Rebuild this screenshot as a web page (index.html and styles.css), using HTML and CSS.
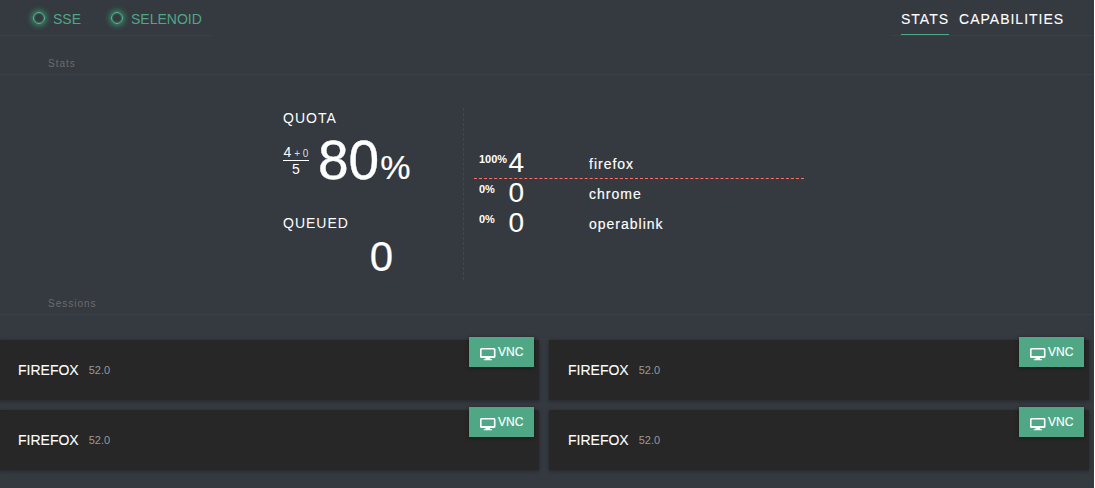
FILE: index.html
```html
<!DOCTYPE html>
<html lang="en">
<head>
<meta charset="utf-8">
<title>Selenoid UI</title>
<link rel="stylesheet" href="styles.css">
</head>
<body>
<svg width="0" height="0" class="defs"><defs>
<symbol id="monitor" viewBox="0 0 16 13"><path fill="currentColor" fill-rule="evenodd" d="M1.500 0H14a1.500 1.500 0 0 1 1.500 1.500v7A1.500 1.500 0 0 1 14 10H1.500A1.500 1.500 0 0 1 0 8.500v-7A1.500 1.500 0 0 1 1.500 0zM1.600 1.500v6.500h12.300V1.500zM5.700 10h4.200l.6 1.200H12V12.300H3.700v-1.100h1.400z"/></symbol>
</defs></svg>
<header class="top">
  <div class="statuses">
    <div class="status"><span class="ring"></span>SSE</div>
    <div class="status"><span class="ring"></span>SELENOID</div>
  </div>
  <nav class="nav"><a class="tab active">STATS</a><a class="tab">CAPABILITIES</a></nav>
</header>
<h2 class="section">Stats</h2>
<main class="stats">
  <section class="totals">
    <div class="label">QUOTA</div>
    <div class="quota">
      <div class="fraction"><div class="used">4<span class="pending"> + 0</span></div><div class="total">5</div></div>
      <div class="percent">80<span class="sign">%</span></div>
    </div>
    <div class="label">QUEUED</div>
    <div class="queued">0</div>
  </section>
  <section class="browsers">
    <div class="browser busy"><b class="share">100%</b><span class="count">4</span><span class="name">firefox</span></div>
    <div class="browser"><b class="share">0%</b><span class="count">0</span><span class="name">chrome</span></div>
    <div class="browser"><b class="share">0%</b><span class="count">0</span><span class="name">operablink</span></div>
  </section>
</main>
<h2 class="section sessions-title">Sessions</h2>
<div class="sessions">
  <article class="session"><span class="title">FIREFOX</span><span class="version">52.0</span><a class="vnc"><svg class="icon"><use href="#monitor"/></svg>VNC</a></article>
  <article class="session"><span class="title">FIREFOX</span><span class="version">52.0</span><a class="vnc"><svg class="icon"><use href="#monitor"/></svg>VNC</a></article>
  <article class="session"><span class="title">FIREFOX</span><span class="version">52.0</span><a class="vnc"><svg class="icon"><use href="#monitor"/></svg>VNC</a></article>
  <article class="session"><span class="title">FIREFOX</span><span class="version">52.0</span><a class="vnc"><svg class="icon"><use href="#monitor"/></svg>VNC</a></article>
</div>
</body>
</html>
```
FILE: styles.css
```css
* { box-sizing: border-box; }
html { background: #fff; }
body {
  margin: 0;
  width: 1094px;
  height: 488px;
  overflow: hidden;
  background: #353940;
  color: #fff;
  font-family: "Liberation Sans", Arial, sans-serif;
}
.defs { display: block; height: 0; }
.top { display: flex; justify-content: space-between; height: 36px; }
.statuses { display: flex; width: 212px; border-bottom: 1px solid #3b3f46; padding-left: 33px; gap: 30px; height: 36px; }
.status { display: flex; align-items: center; font-size: 14px; line-height: 38px; color: #4fa785; white-space: nowrap; height: 38px; }
.ring { width: 12px; height: 12px; border: 1px solid #59ba95; border-radius: 50%; margin: 0 8px 2px 0; box-shadow: 0 0 6px 1px #32a873, inset 0 0 2px #32a873; }
.nav { display: flex; gap: 10px; width: 203px; padding-left: 10px; border-bottom: 1px solid #3b3f46; }
.tab { height: 35px; line-height: 38px; font-size: 14px; letter-spacing: 1px; -webkit-text-stroke: .1px; }
.active { border-bottom: 1px solid #4fa785; }
.section { margin: 0; height: 39px; padding: 21px 0 0 48px; border-bottom: 1px solid #3b3f46; color: #6c6c6c; font-size: 10px; line-height: 13px; font-weight: 400; letter-spacing: 1px; }
.stats { display: flex; height: 204px; margin: 33px 0 -33px 283px; }
.totals { width: 181px; height: 172px; border-right: 1px dashed #44484e; }
.label { font-size: 14px; line-height: 20px; letter-spacing: 1px; }
.quota { display: flex; height: 85px; }
.fraction { width: 26px; margin-top: 17px; text-align: center; font-size: 14px; white-space: nowrap; }
.used { height: 16px; line-height: 15px; border-bottom: 1px solid #fff; }
.pending { font-size: 10px; color: #ddd; }
.total { line-height: 17px; }
.percent { margin-left: 9px; font-size: 55px; line-height: 65px; white-space: nowrap; -webkit-text-stroke: .4px; }
.sign { font-size: 34px; margin-left: 1px; -webkit-text-stroke: .2px; }
.queued { width: 110px; text-align: right; font-size: 42px; line-height: 47px; -webkit-text-stroke: .2px; }
.browsers { width: 330px; margin: 41px 0 0 10px; }
.browser { display: flex; height: 30px; padding-left: 5px; }
.busy { border-bottom: 1px dashed #ff6e67; }
.share { width: 29.5px; font-size: 11px; line-height: 20px; }
.count { width: 80.5px; font-size: 28px; line-height: 28px; -webkit-text-stroke: .1px; }
.name { font-size: 14px; line-height: 30px; letter-spacing: 1px; -webkit-text-stroke: .15px; }
.sessions-title { height: 36px; padding-top: 18px; }
.sessions { display: grid; grid-template-columns: 540px 540px; gap: 10px; margin: 25px 0 0 -1px; }
.session { position: relative; display: flex; align-items: center; gap: 10px; height: 60px; padding-left: 19px; background: #272727; box-shadow: 0 1px 4px rgba(0, 0, 0, .35); }
.title { font-size: 14px; -webkit-text-stroke: .1px; }
.version { font-size: 11px; color: #999; }
.vnc { position: absolute; right: 5px; top: -3px; display: flex; width: 65px; height: 30px; padding-left: 11px; background: #4fa785; font-size: 12px; line-height: 30px; box-shadow: 0 1px 4px rgba(0, 0, 0, .4); -webkit-text-stroke: .15px; }
.icon { width: 16px; height: 13px; margin: 11px 2px 0 0; }
```
